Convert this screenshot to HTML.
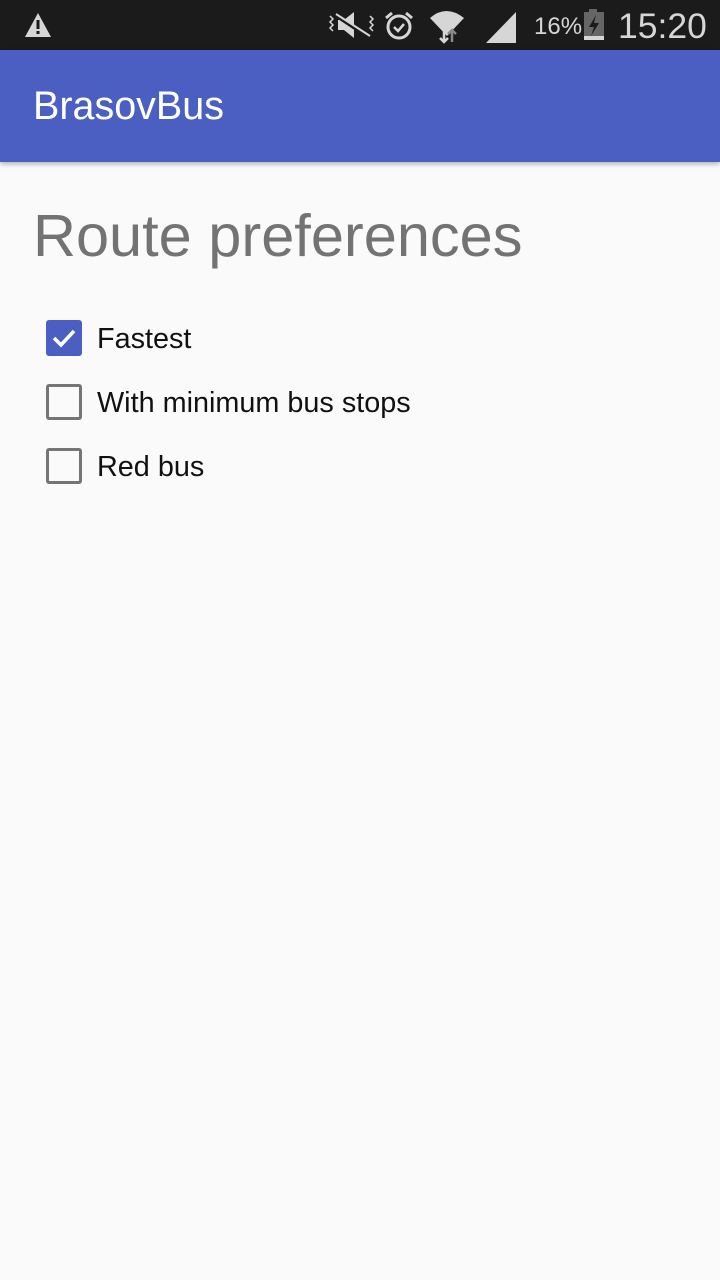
<!DOCTYPE html>
<html><head><style>
body{margin:0;width:720px;height:1280px;background:#fafafa;font-family:"Liberation Sans",sans-serif;position:relative;overflow:hidden}
.sb{position:absolute;left:0;top:0;width:720px;height:50px;background:#1b1b1b;color:#d6d6d6}
.ab{position:absolute;left:0;top:50px;width:720px;height:112px;background:#4a5fc1;box-shadow:0 2px 5px rgba(0,0,0,.3)}
.ab span{position:absolute;left:33px;top:34px;font-size:39.5px;color:#fff}
h1{position:absolute;left:33px;top:203px;margin:0;font-weight:normal;font-size:59.5px;color:#737373;line-height:66px}
.cb{position:absolute;left:46px;width:30px;height:30px;border:3px solid #757575;border-radius:3px}
.cb.on{background:#4a5fc1;border-color:#4a5fc1}
.t{position:absolute;left:97px;font-size:28.8px;color:#111;line-height:32px}
</style></head><body>
<div class="sb">
<svg style="position:absolute;left:24px;top:12px" width="28" height="26"><path d="M14 1L27 25H1Z" fill="#d6d6d6"/><rect x="12.5" y="8" width="3" height="9" fill="#1b1b1b"/><rect x="12.5" y="19" width="3" height="3" fill="#1b1b1b"/></svg>
<svg style="position:absolute;left:326px;top:10px" width="50" height="30"><path d="M12 10h6l10-8v26l-10-8h-6z" fill="#d6d6d6"/><path d="M8 4l36 24" stroke="#1b1b1b" stroke-width="4"/><path d="M10 4l34 22" stroke="#d6d6d6" stroke-width="2"/><path d="M4 6l3 3-3 3 3 3-3 3 3 3M44 6l3 3-3 3 3 3-3 3 3 3" fill="none" stroke="#d6d6d6" stroke-width="1.5"/></svg>
<svg style="position:absolute;left:384px;top:10px" width="30" height="32"><circle cx="15" cy="17" r="11" fill="none" stroke="#d6d6d6" stroke-width="3"/><path d="M10 17l4 4 6-7" fill="none" stroke="#d6d6d6" stroke-width="2.5"/><path d="M2 8l6-5M28 8l-6-5" stroke="#d6d6d6" stroke-width="3"/></svg>
<svg style="position:absolute;left:428px;top:8px" width="40" height="36"><path d="M2 10Q18 -4 36 10L19 28Z" fill="#d6d6d6"/><path d="M16 22v12M12 30l4 4 4-4" stroke="#d6d6d6" stroke-width="2.5" fill="none"/><path d="M24 34v-10M20 26l4-4 4 4" stroke="#888" stroke-width="2.5" fill="none"/></svg>
<svg style="position:absolute;left:484px;top:10px" width="34" height="34"><path d="M2 33L32 2V33Z" fill="#d6d6d6"/></svg>
<span style="position:absolute;left:534px;top:13px;font-size:24px">16%</span>
<svg style="position:absolute;left:582px;top:9px" width="24" height="34"><rect x="7" y="0" width="8" height="3" fill="#666"/><rect x="2" y="3" width="20" height="28" fill="#666"/><rect x="2" y="27" width="20" height="4" fill="#d6d6d6"/><path d="M14 6l-7 12h5l-3 9 8-13h-5z" fill="#1b1b1b"/></svg>
<span style="position:absolute;left:618px;top:6px;font-size:35.5px">15:20</span>
</div>
<div class="ab"><span>BrasovBus</span></div>
<h1>Route preferences</h1>
<div class="cb on" style="top:320px"><svg width="30" height="30"><path d="M5 15l7 7 13-14" fill="none" stroke="#fff" stroke-width="3.5"/></svg></div>
<div class="t" style="top:323px">Fastest</div>
<div class="cb" style="top:384px"></div>
<div class="t" style="top:387px">With minimum bus stops</div>
<div class="cb" style="top:448px"></div>
<div class="t" style="top:451px">Red bus</div>
</body></html>
